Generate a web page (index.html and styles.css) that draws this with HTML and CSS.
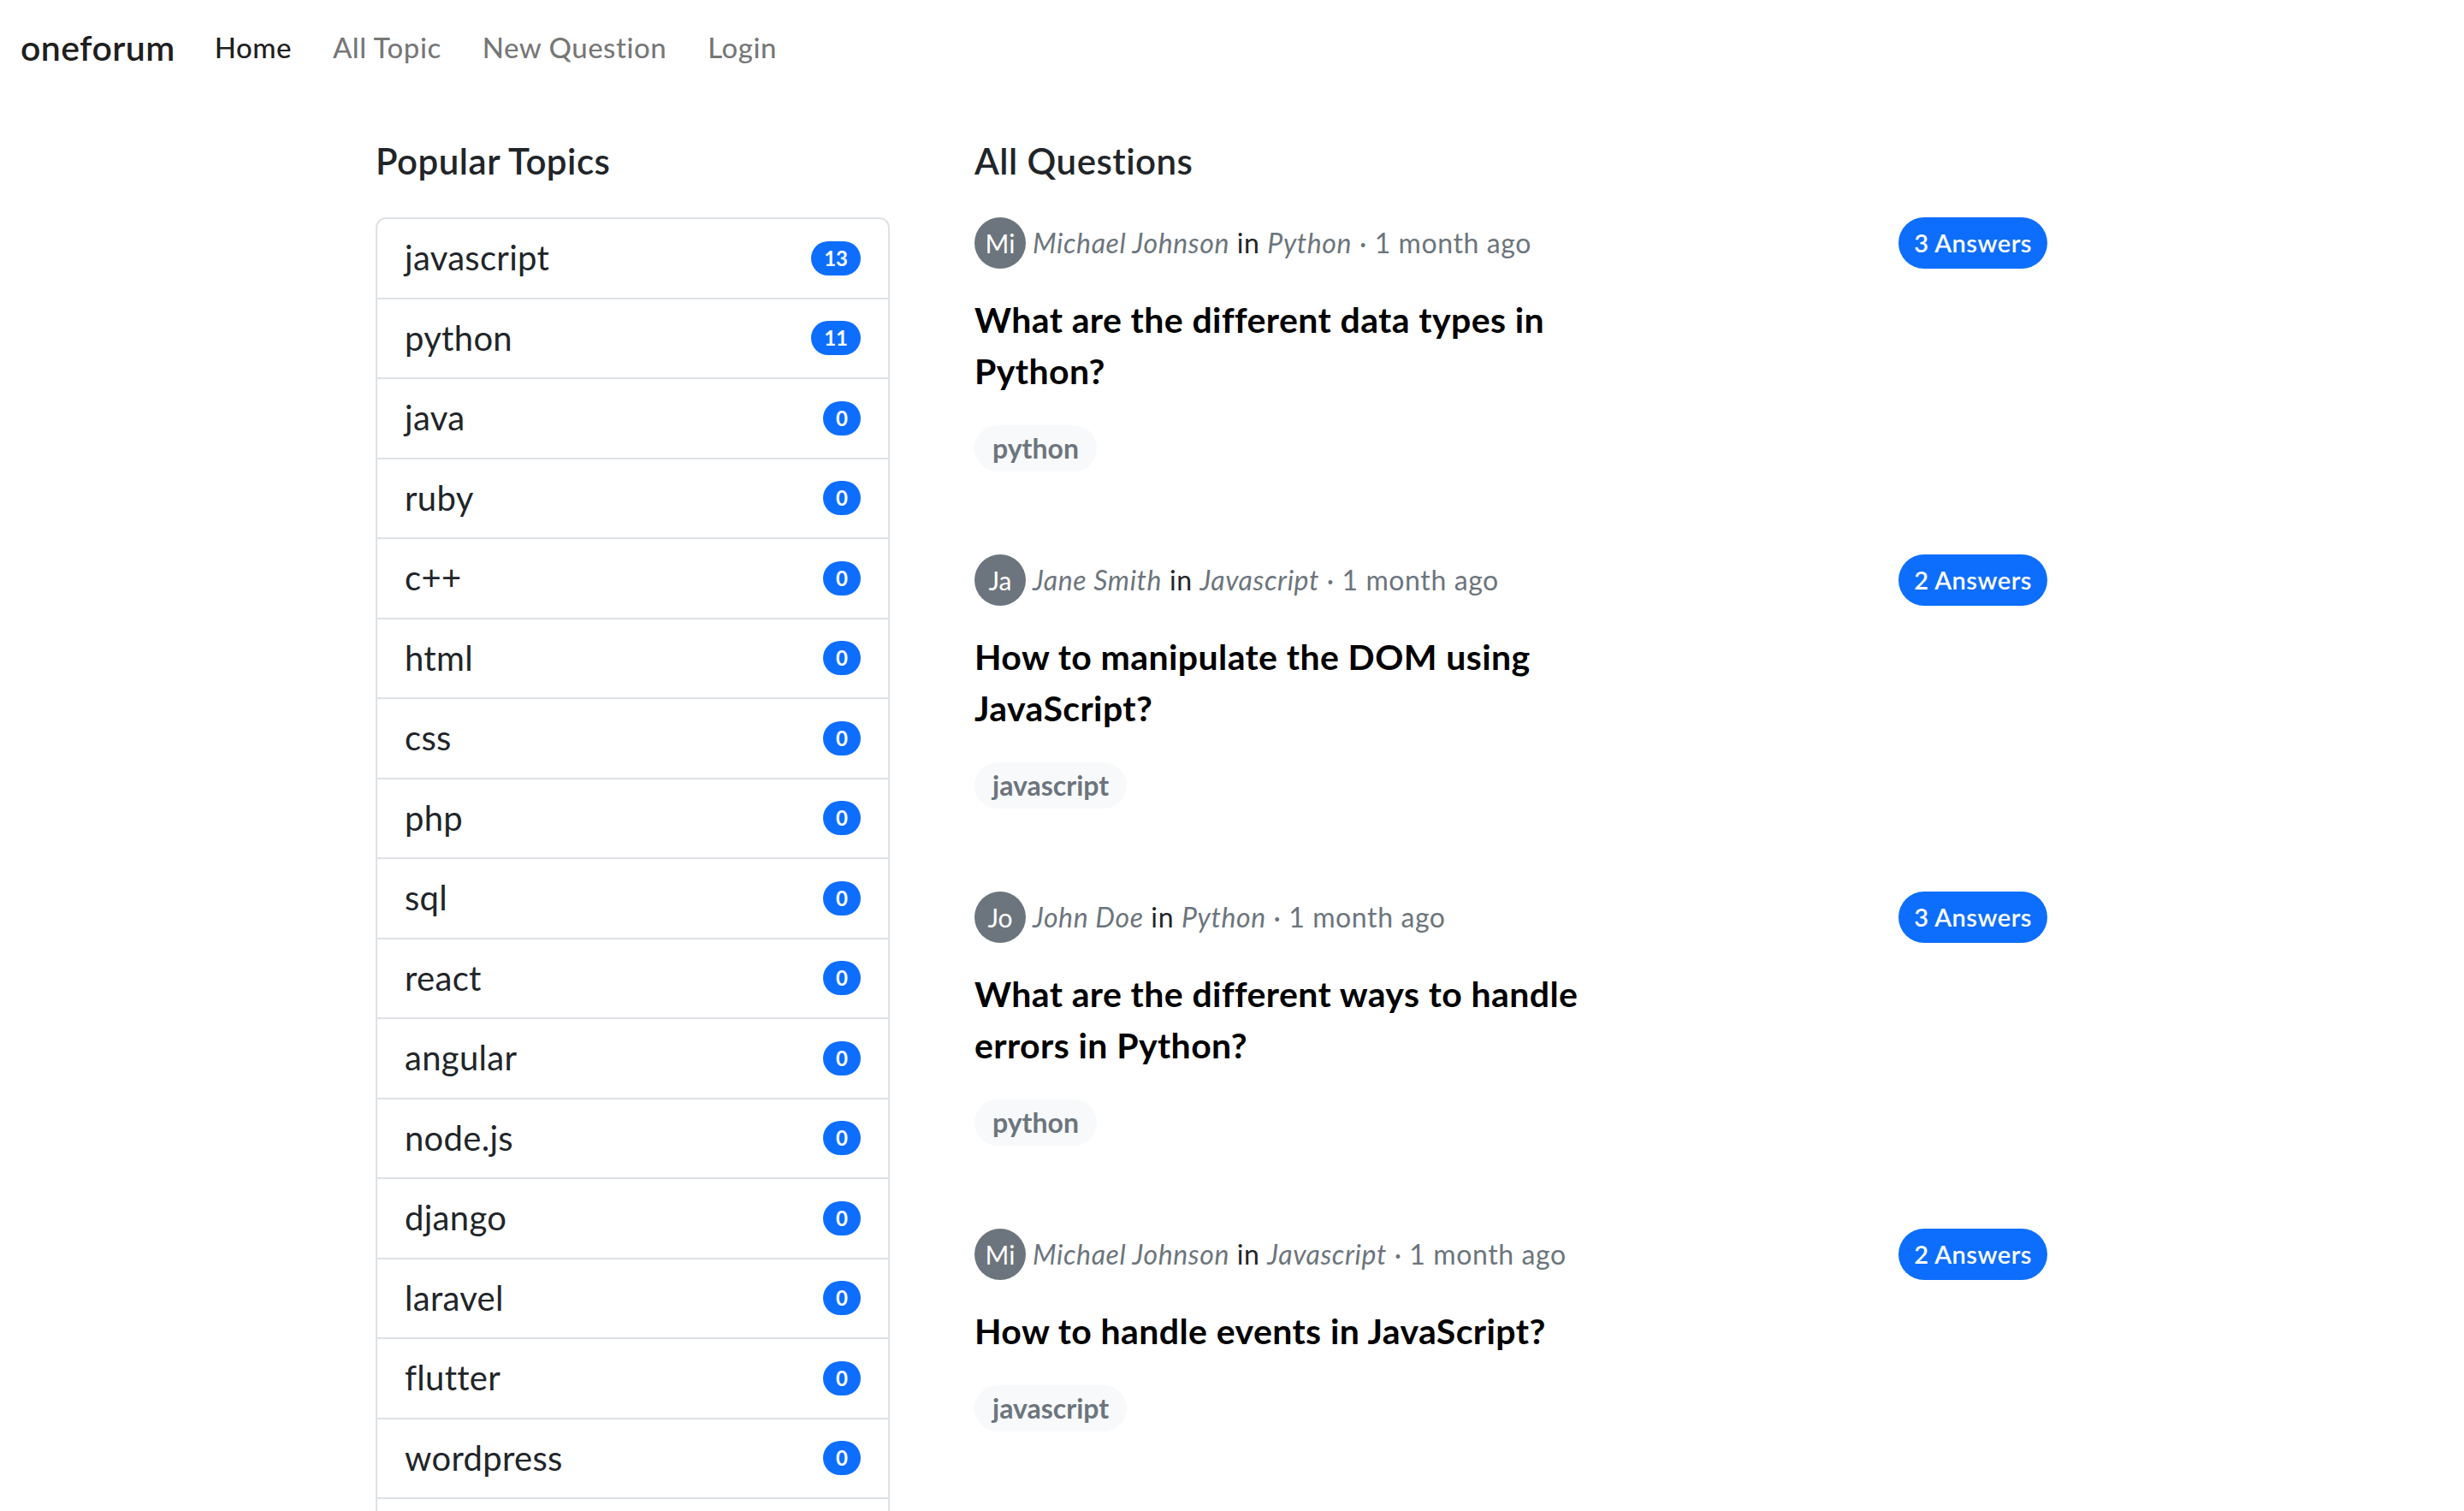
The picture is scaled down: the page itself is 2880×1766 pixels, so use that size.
FILE: index.html
```html
<!DOCTYPE html>
<html lang="en">
<head>
<meta charset="utf-8">
<title>oneforum</title>
<link rel="stylesheet" href="styles.css">
</head>
<body>
<nav class="navbar">
  <a class="brand" href="#">oneforum</a>
  <ul class="nav">
    <li><a class="nav-link active" href="#">Home</a></li>
    <li><a class="nav-link" href="#">All Topic</a></li>
    <li><a class="nav-link" href="#">New Question</a></li>
    <li><a class="nav-link" href="#">Login</a></li>
  </ul>
</nav>

<main class="main">
  <aside class="sidebar">
    <h5 class="section-title">Popular Topics</h5>
    <ul class="list-group">
      <li class="list-item"><span>javascript</span><span class="count">13</span></li>
      <li class="list-item"><span>python</span><span class="count">11</span></li>
      <li class="list-item"><span>java</span><span class="count">0</span></li>
      <li class="list-item"><span>ruby</span><span class="count">0</span></li>
      <li class="list-item"><span>c++</span><span class="count">0</span></li>
      <li class="list-item"><span>html</span><span class="count">0</span></li>
      <li class="list-item"><span>css</span><span class="count">0</span></li>
      <li class="list-item"><span>php</span><span class="count">0</span></li>
      <li class="list-item"><span>sql</span><span class="count">0</span></li>
      <li class="list-item"><span>react</span><span class="count">0</span></li>
      <li class="list-item"><span>angular</span><span class="count">0</span></li>
      <li class="list-item"><span>node.js</span><span class="count">0</span></li>
      <li class="list-item"><span>django</span><span class="count">0</span></li>
      <li class="list-item"><span>laravel</span><span class="count">0</span></li>
      <li class="list-item"><span>flutter</span><span class="count">0</span></li>
      <li class="list-item"><span>wordpress</span><span class="count">0</span></li>
      <li class="list-item"><span>vue</span><span class="count">0</span></li>
    </ul>
  </aside>

  <section class="questions">
    <h5 class="section-title">All Questions</h5>

    <article class="question">
      <div class="meta-row">
        <div class="meta">
          <span class="avatar">Mi</span>
          <span class="meta-text"><em>Michael Johnson</em> <span class="dark">in</span> <em>Python</em> · 1 month ago</span>
        </div>
        <a class="answers" href="#">3 Answers</a>
      </div>
      <h4 class="q-title">What are the different data types in Python?</h4>
      <span class="tag">python</span>
    </article>

    <article class="question">
      <div class="meta-row">
        <div class="meta">
          <span class="avatar">Ja</span>
          <span class="meta-text"><em>Jane Smith</em> <span class="dark">in</span> <em>Javascript</em> · 1 month ago</span>
        </div>
        <a class="answers" href="#">2 Answers</a>
      </div>
      <h4 class="q-title">How to manipulate the DOM using JavaScript?</h4>
      <span class="tag">javascript</span>
    </article>

    <article class="question">
      <div class="meta-row">
        <div class="meta">
          <span class="avatar">Jo</span>
          <span class="meta-text"><em>John Doe</em> <span class="dark">in</span> <em>Python</em> · 1 month ago</span>
        </div>
        <a class="answers" href="#">3 Answers</a>
      </div>
      <h4 class="q-title">What are the different ways to handle errors in Python?</h4>
      <span class="tag">python</span>
    </article>

    <article class="question">
      <div class="meta-row">
        <div class="meta">
          <span class="avatar">Mi</span>
          <span class="meta-text"><em>Michael Johnson</em> <span class="dark">in</span> <em>Javascript</em> · 1 month ago</span>
        </div>
        <a class="answers" href="#">2 Answers</a>
      </div>
      <h4 class="q-title">How to handle events in JavaScript?</h4>
      <span class="tag">javascript</span>
    </article>
  </section>
</main>
</body>
</html>
```

FILE: styles.css
```css
* { box-sizing: border-box; }

html, body {
  margin: 0;
  padding: 0;
  background: #fff;
}

body {
  font-family: Lato, "Noto Sans", "Liberation Sans", sans-serif;
  font-size: 32px;
  line-height: 1.5;
  color: #212529;
}

a { text-decoration: none; }

/* ---------- navbar ---------- */
.navbar {
  height: 112px;
  display: flex;
  align-items: center;
  padding: 0 24px;
}

.brand {
  font-size: 41px;
  font-weight: 600;
  letter-spacing: 0.4px;
  color: rgba(0, 0, 0, 0.9);
  margin-right: 46px;
}

.nav {
  list-style: none;
  margin: 0;
  padding: 0;
  display: flex;
  gap: 48px;
}

.nav-link {
  font-size: 33px;
  font-weight: 500;
  letter-spacing: 0.5px;
  color: rgba(0, 0, 0, 0.55);
}

.nav-link.active { color: rgba(0, 0, 0, 0.9); }

/* ---------- layout ---------- */
.main {
  display: flex;
  align-items: flex-start;
  gap: 99px;
  padding: 52px 0 0 439px;
}

.sidebar { width: 601px; flex: none; }
.questions { width: 1254px; flex: none; }

.section-title {
  margin: 0 0 42px;
  font-size: 42px;
  line-height: 48px;
  font-weight: 600;
  letter-spacing: 0.5px;
  color: #212529;
}

/* ---------- topics list ---------- */
.list-group {
  list-style: none;
  margin: 0;
  padding: 0;
  border: 2px solid #dee2e6;
  border-radius: 12px;
}

.list-item {
  display: flex;
  justify-content: space-between;
  align-items: center;
  padding: 16px 32px;
  font-size: 40px;
  line-height: 59.5px;
  letter-spacing: 0.3px;
  color: #212529;
}

.list-item + .list-item { border-top: 2px solid #dee2e6; }

.count {
  display: inline-block;
  min-width: 44px;
  text-align: center;
  padding: 8px 15px;
  font-size: 24px;
  line-height: 1;
  font-weight: 700;
  letter-spacing: 0;
  color: #fff;
  background: #0d6efd;
  border-radius: 999px;
}

/* ---------- questions ---------- */
.question { padding-bottom: 97px; }

.meta-row {
  display: flex;
  justify-content: space-between;
  align-items: center;
  height: 60px;
}

.meta {
  display: flex;
  align-items: center;
}

.avatar {
  width: 60px;
  height: 60px;
  border-radius: 50%;
  background: #6c757d;
  color: #fff;
  font-size: 30px;
  display: flex;
  align-items: center;
  justify-content: center;
  margin-right: 8px;
}

.meta-text {
  font-size: 32px;
  letter-spacing: 0.6px;
  color: #6c757d;
}

.meta-text em { font-style: italic; }
.meta-text .dark { color: #212529; }

.answers {
  display: inline-block;
  font-size: 29px;
  line-height: 42px;
  font-weight: 600;
  letter-spacing: 0.5px;
  padding: 9px 18px;
  color: #fff;
  background: #0d6efd;
  border-radius: 999px;
}

.q-title {
  margin: 30px 0 33px;
  max-width: 770px;
  font-size: 41px;
  line-height: 60px;
  font-weight: 700;
  letter-spacing: 0.4px;
  color: #000;
}

.tag {
  display: inline-block;
  padding: 11px 21px;
  font-size: 32px;
  line-height: 1;
  font-weight: 700;
  color: #6c757d;
  background: #f8f9fa;
  border-radius: 999px;
}
```
